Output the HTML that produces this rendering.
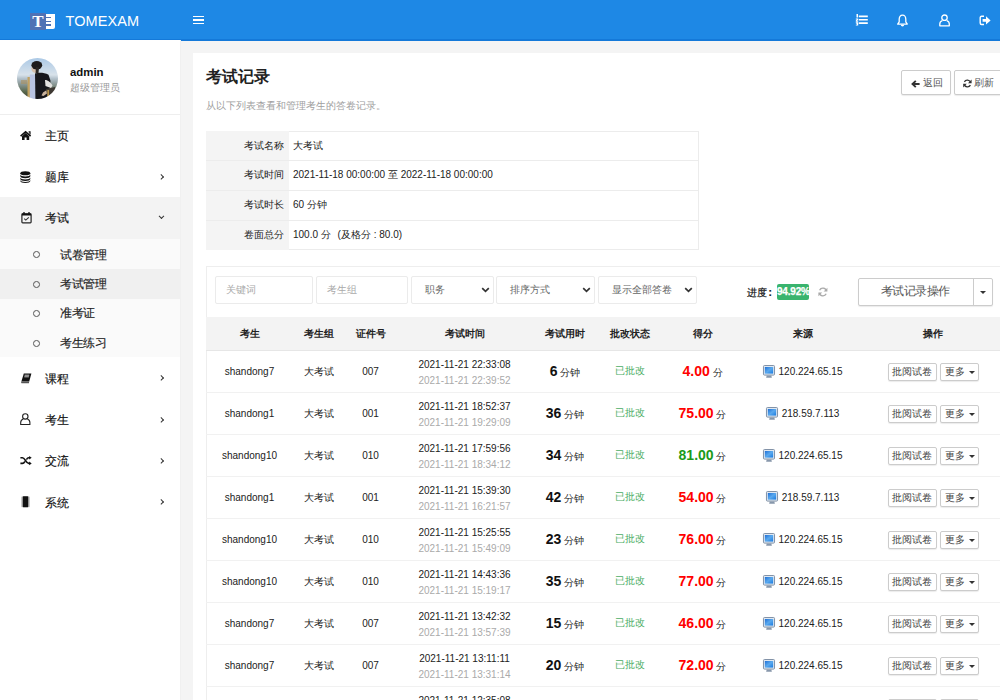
<!DOCTYPE html>
<html><head><meta charset="utf-8"><title>考试记录</title>
<style>
*{box-sizing:border-box;margin:0;padding:0}
html,body{width:1000px;height:700px;overflow:hidden}
body{position:relative;background:#f4f4f4;font-family:"Liberation Sans",sans-serif;color:#333;font-size:10px}
.a{position:absolute;white-space:nowrap}
svg{position:absolute;overflow:visible}
#hdr{position:absolute;left:0;top:0;width:1000px;height:41px;background:#1e88e5;box-shadow:inset 0 -2px 0 #1479d9}
.mt{position:absolute;left:45px;font-size:12px;letter-spacing:-0.5px;line-height:20px;color:#111;-webkit-text-stroke:0.15px #111}
.chev{position:absolute;left:158.6px;width:4.4px;height:4.4px;border-right:1.2px solid #333;border-top:1.2px solid #333;transform:rotate(45deg)}
.st{position:absolute;left:60px;font-size:12px;letter-spacing:-0.5px;line-height:20px;color:#222;-webkit-text-stroke:0.15px #222}
.bul{position:absolute;left:32.8px;width:6.8px;height:6.8px;border:1.2px solid #555;border-radius:50%}
.lab{position:absolute;left:206px;width:83px;height:29.6px;background:#f4f4f4;text-align:right;padding-right:5px;line-height:29.6px;font-size:10px;color:#222}
.val{position:absolute;left:293px;line-height:29.6px;font-size:10px;color:#222}
.hl{position:absolute;left:206px;width:493px;height:1px;background:#ececec}
.inp{position:absolute;top:275.5px;height:28px;border:1px solid #ebebeb;border-radius:2px;background:#fff}
.ph{position:absolute;left:10px;top:0;line-height:26px;font-size:10px;color:#aaa}
.sel .ph{color:#666;left:13px}
.dn{position:absolute;top:10.5px}
.th{position:absolute;top:317px;height:33px;line-height:33px;font-size:10px;font-weight:bold;color:#222;text-align:center}
.row{position:absolute;left:206px;width:800px;height:42px;border-bottom:1px solid #f1f1f1}
.c{position:absolute;text-align:center;font-size:10px;color:#222;white-space:nowrap}
.btn{position:absolute;height:18.5px;border:1px solid #ccc;border-radius:2px;background:#fff;box-shadow:0 1px 1px rgba(0,0,0,.08);font-size:10px;line-height:16.5px;color:#444;text-align:center}
.car{position:absolute;width:0;height:0;border-left:3px solid transparent;border-right:3px solid transparent;border-top:3px solid #333}
</style></head><body>
<div id="hdr">
<div class="a" style="left:30px;top:13.3px;width:16px;height:16.4px;background:#4f72b5"></div>
<div class="a" style="left:46px;top:13.9px;width:8.5px;height:14.9px;background:#fff;border-bottom-right-radius:2px"></div>
<div class="a" style="left:46px;top:16.7px;width:5px;height:1.6px;background:#4f72b5"></div>
<div class="a" style="left:46px;top:20.6px;width:5px;height:1.6px;background:#4f72b5"></div>
<div class="a" style="left:46px;top:24.4px;width:5px;height:1.6px;background:#4f72b5"></div>
<div class="a" style="left:32px;top:10.5px;font-family:'Liberation Serif',serif;font-weight:bold;font-size:17px;line-height:22px;color:#fff;width:12px;text-align:center">T</div>
<div class="a" style="left:65.5px;top:11px;font-size:14.5px;line-height:20px;color:#fff;letter-spacing:0.1px">TOMEXAM</div>
<div class="a" style="left:193px;top:15.7px;width:11px;height:1.6px;background:#fff"></div>
<div class="a" style="left:193px;top:19.1px;width:11px;height:1.6px;background:#fff"></div>
<div class="a" style="left:193px;top:22.5px;width:11px;height:1.6px;background:#fff"></div>
<svg width="14" height="14" style="left:855px;top:13px" viewBox="0 0 14 14"><path d="M3.8 3.4h9M3.8 6.8h9M3.8 10.1h9" stroke="#fff" stroke-width="1.6"/><path d="M1.5 1h1.5v3.6H1.5z" fill="#fff"/><path d="M.8 5.6h2.4v1.2l-1.2 1h1.2v.9H.8V7.6l1.2-1H.8z" fill="#fff"/><path d="M.8 9.3h2.4v3.3H.8v-.9h1.2v-.5H1.2v-.7h.8v-.3H.8z" fill="#fff"/></svg>
<svg width="12" height="13" style="left:897px;top:13.5px" viewBox="0 0 12 13"><path d="M5.5 1.2c-2.2 0-3.3 1.9-3.3 4v2.6L.7 10.1h9.6L8.8 7.8V5.2c0-2.1-1.1-4-3.3-4z" stroke="#fff" stroke-width="1.3" fill="none" stroke-linejoin="round"/><path d="M3.8 10.8a1.7 1.7 0 0 0 3.4 0z" fill="#fff"/></svg>
<svg width="12" height="13" style="left:938.5px;top:13.5px" viewBox="0 0 12 13"><circle cx="5.5" cy="3.7" r="2.7" stroke="#fff" stroke-width="1.3" fill="none"/><path d="M3.3 6.6C1.6 7.2.8 8.6.8 10v1.8h9.5V10c0-1.4-.8-2.8-2.5-3.4" stroke="#fff" stroke-width="1.3" fill="none" stroke-linejoin="round"/></svg>
<svg width="13" height="11" style="left:978.5px;top:14.5px" viewBox="0 0 13 11"><path d="M5 1.3H2.6C1.7 1.3 1.2 1.9 1.2 2.8v5.2c0 .9.5 1.5 1.4 1.5H5" stroke="#fff" stroke-width="1.4" fill="none"/><path d="M3.6 4.1h3.4V1.2l4.6 4.2-4.6 4.2V6.7H3.6z" fill="#fff"/></svg>
</div>
<div class="a" style="left:0;top:40px;width:180px;height:660px;background:#fff"></div>
<div class="a" style="left:16.7px;top:57.6px;width:41px;height:41px;border-radius:50%;overflow:hidden"><svg width="41" height="41" style="left:0;top:0;filter:blur(0.5px)" viewBox="0 0 41 41"><defs><linearGradient id="sky" x1="0" y1="0" x2="0" y2="1"><stop offset="0" stop-color="#a6c6e6"/><stop offset=".42" stop-color="#d8e2ea"/><stop offset=".5" stop-color="#b4c2cc"/><stop offset=".62" stop-color="#8c9a98"/><stop offset=".8" stop-color="#56654a"/><stop offset="1" stop-color="#3a3a2c"/></linearGradient></defs><rect x="-2" y="-2" width="45" height="45" fill="url(#sky)"/><path d="M10.5 19h3.5v22h-3.5z" fill="#c2a260"/><path d="M4 22h6v4H4z" fill="#a89060" opacity=".6"/><path d="M12.8 16.5h6v25h-6z" fill="#b9c4e2"/><path d="M18 15.5c3-1.2 9-1.3 13.5 1.2l2 6-1.5 19H18.5z" fill="#17171c"/><path d="M28 22c3 0 6 2.5 7.5 5.5l-1.5 2.5-5.5-2z" fill="#e4e2e0"/><path d="M34 29.5c-2 1.5-5 3-8 5l-1.5 3 2 .5c2.5-2 6-4 8.5-6.5z" fill="#c9b29c"/><path d="M29 31l9-2 3 12h-10z" fill="#3d3832"/><path d="M30.3 32h1.8v9h-1.8z" fill="#b8934a"/><path d="M14.2 9.6c.2 2.8 1 4.6 3 5.2l3.2-.4.6-6.2z" fill="#d4beac"/><ellipse cx="19.8" cy="7.2" rx="5.4" ry="4.2" fill="#1d1a1a"/><path d="M19 9l3 .5-.5 5.5-3 .5z" fill="#2a2522"/></svg></div>
<div class="a" style="left:70px;top:63px;font-size:11.4px;font-weight:bold;line-height:18px;color:#111">admin</div>
<div class="a" style="left:70px;top:79px;font-size:10px;line-height:18px;color:#999">超级管理员</div>
<div class="a" style="left:0;top:114px;width:180px;height:1px;background:#eee"></div>
<div class="a" style="left:0;top:197.3px;width:180px;height:42px;background:#f3f3f3"></div>
<div class="a" style="left:0;top:239.3px;width:180px;height:118px;background:#fafafa"></div>
<div class="a" style="left:0;top:269px;width:180px;height:29.5px;background:#f0f0f0"></div>
<div class="mt" style="top:126px">主页</div>
<div class="mt" style="top:167px">题库</div>
<div class="chev" style="top:174.7px"></div>
<div class="mt" style="top:208px">考试</div>
<div class="chev" style="top:213.7px;left:159.3px;transform:rotate(135deg)"></div>
<div class="mt" style="top:368.5px">课程</div>
<div class="chev" style="top:376.2px"></div>
<div class="mt" style="top:410px">考生</div>
<div class="chev" style="top:417.7px"></div>
<div class="mt" style="top:451px">交流</div>
<div class="chev" style="top:458.7px"></div>
<div class="mt" style="top:492.5px">系统</div>
<div class="chev" style="top:500.2px"></div>
<div class="st" style="top:244.6px">试卷管理</div>
<div class="bul" style="top:251.4px"></div>
<div class="st" style="top:274px">考试管理</div>
<div class="bul" style="top:280.8px"></div>
<div class="st" style="top:303.4px">准考证</div>
<div class="bul" style="top:310.2px"></div>
<div class="st" style="top:333.3px">考生练习</div>
<div class="bul" style="top:340.1px"></div>
<svg width="12" height="10" style="left:20px;top:131px" viewBox="0 0 12 10"><path d="M0.6 5.2L5.6 .8l5 4.4" stroke="#111" stroke-width="1.6" fill="none"/><path d="M8.6 .8h1.4v2.6" stroke="#111" stroke-width="1.2" fill="none"/><path d="M2 5.2L5.6 2.1 9.2 5.2V9H6.6V6.6H4.6V9H2z" fill="#111"/></svg>
<svg width="11" height="12" style="left:20.3px;top:171px" viewBox="0 0 11 12"><ellipse cx="5.3" cy="2.2" rx="5" ry="2" fill="#111"/><path d="M.3 3.6c0 1.2 2.2 2 5 2s5-.8 5-2v1.6c0 1.2-2.2 2-5 2s-5-.8-5-2zM.3 6.4c0 1.2 2.2 2 5 2s5-.8 5-2v1.6c0 1.2-2.2 2-5 2s-5-.8-5-2zM.3 9.1c0 1.2 2.2 2 5 2s5-.8 5-2v.9c0 1.2-2.2 2-5 2s-5-.8-5-2z" fill="#111"/></svg>
<svg width="12" height="12" style="left:20.5px;top:212px" viewBox="0 0 12 12"><rect x="0.9" y="1.9" width="9.2" height="9" rx=".8" stroke="#222" stroke-width="1.2" fill="none"/><path d="M.9 2.5h9.2" stroke="#111" stroke-width="2"/><path d="M3 0v2.6M8 0v2.6" stroke="#111" stroke-width="1.3"/><path d="M3.2 6.6l1.6 1.5 3-2.8" stroke="#333" stroke-width="1.1" fill="none"/></svg>
<svg width="11" height="11" style="left:20.5px;top:373px" viewBox="0 0 11 11"><path d="M2.8.4h7.6L8.2 8.4H.4z" fill="#111"/><path d="M.4 8.4h7.8l-.3 1.8H.6c-.5 0-.6-1.8-.2-1.8z" fill="#555"/><path d="M3.6 2.2h4.6M3.3 3.8h4.6" stroke="#ddd" stroke-width=".9"/></svg>
<svg width="11" height="13" style="left:20.3px;top:413px" viewBox="0 0 11 13"><circle cx="5.3" cy="3.4" r="2.7" stroke="#222" stroke-width="1.1" fill="none"/><path d="M3.2 5.9C1.4 6.6.7 8.1.7 9.6v1.9h9.2V9.6c0-1.5-.7-3-2.5-3.7" stroke="#222" stroke-width="1.1" fill="none"/></svg>
<svg width="12" height="10" style="left:20.3px;top:455.5px" viewBox="0 0 12 10"><path d="M.4 1.8h2c2.6 0 3.6 5.6 6.4 5.6h1.2M.4 7.4h2c1.2 0 1.9-.9 2.5-1.9M6.4 3.6c.6-1 1.2-1.8 2.4-1.8h1.2" stroke="#111" stroke-width="1.6" fill="none"/><path d="M9.2 0l2.5 1.8-2.5 1.8zM9.2 5.6l2.5 1.8-2.5 1.8z" fill="#111"/></svg>
<svg width="11" height="12" style="left:20.3px;top:495.5px" viewBox="0 0 11 12"><rect x="1" y="0.4" width="9" height="10.8" rx="1" fill="#ccc"/><rect x="2.7" y="0.2" width="5.6" height="11" rx=".6" fill="#111"/></svg>
<div class="a" style="left:180px;top:40px;width:1px;height:660px;background:#f0f0f0"></div>
<div class="a" style="left:193px;top:53px;width:820px;height:700px;background:#fff"></div>
<div class="a" style="left:206px;top:66px;font-size:16px;font-weight:bold;line-height:22px;color:#222">考试记录</div>
<div class="a" style="left:206px;top:95.5px;font-size:10px;line-height:20px;color:#a0a0a0">从以下列表查看和管理考生的答卷记录。</div>
<div class="btn" style="left:901px;top:70px;width:49.5px;height:25px;line-height:23px;padding-left:20.5px;text-align:left;font-size:10px;color:#555">返回</div>
<svg width="9" height="8" style="left:910.5px;top:79.5px" viewBox="0 0 9 8"><path d="M8.6 4H1.8M4.8 .9L1.5 4l3.3 3.1" stroke="#333" stroke-width="1.9" fill="none"/></svg>
<div class="btn" style="left:953.8px;top:70px;width:60px;height:25px;line-height:23px;padding-left:19.5px;text-align:left;font-size:10px;color:#555">刷新</div>
<svg width="9" height="9" style="left:962.5px;top:78.5px" viewBox="0 0 9 9"><path d="M7.6 3.6A3.4 3.4 0 0 0 1.4 2.8M1.2 5.4a3.4 3.4 0 0 0 6.2.8" stroke="#333" stroke-width="1.4" fill="none"/><path d="M8.6 .6v3.6H5zM.2 8.4V4.8h3.6z" fill="#333"/></svg>
<div class="a" style="left:206px;top:130.5px;width:493px;height:119px;border:1px solid #ececec"></div>
<div class="lab" style="top:130.50px;height:29.75px">考试名称</div>
<div class="val" style="top:130.50px">大考试</div>
<div class="lab" style="top:160.25px;height:29.75px">考试时间</div>
<div class="val" style="top:160.25px">2021-11-18 00:00:00 至 2022-11-18 00:00:00</div>
<div class="hl" style="top:160.25px"></div>
<div class="lab" style="top:190.00px;height:29.75px">考试时长</div>
<div class="val" style="top:190.00px">60 分钟</div>
<div class="hl" style="top:190.00px"></div>
<div class="lab" style="top:219.75px;height:29.75px">卷面总分</div>
<div class="val" style="top:219.75px">100.0 分 <span style="margin-left:4px">(及格分 : 80.0)</span></div>
<div class="hl" style="top:219.75px"></div>
<div class="a" style="left:206px;top:266.3px;width:820px;height:450px;border:1px solid #eee;background:#fff"></div>
<div class="inp" style="left:215px;width:98.3px"><div class="ph">关键词</div></div>
<div class="inp" style="left:316.2px;width:91.8px"><div class="ph">考生组</div></div>
<div class="inp sel" style="left:411.4px;width:82.3px"><div class="ph">职务</div><svg class="dn" width="9" height="6" style="left:69px" viewBox="0 0 9 6"><path d="M1.2 1.2L4.5 4.4 7.8 1.2" stroke="#333" stroke-width="1.7" fill="none"/></svg></div>
<div class="inp sel" style="left:496px;width:98.6px"><div class="ph">排序方式</div><svg class="dn" width="9" height="6" style="left:85px" viewBox="0 0 9 6"><path d="M1.2 1.2L4.5 4.4 7.8 1.2" stroke="#333" stroke-width="1.7" fill="none"/></svg></div>
<div class="inp sel" style="left:597.6px;width:99.1px"><div class="ph">显示全部答卷</div><svg class="dn" width="9" height="6" style="left:85.5px" viewBox="0 0 9 6"><path d="M1.2 1.2L4.5 4.4 7.8 1.2" stroke="#333" stroke-width="1.7" fill="none"/></svg></div>
<div class="a" style="left:747px;top:282.5px;font-size:10px;line-height:20px;color:#111;-webkit-text-stroke:0.2px #111">进度<span style="margin-left:1.5px;font-weight:bold">:</span></div>
<div class="a" style="left:777px;top:283.5px;width:32px;height:16.4px;background:#39b46e;border-radius:2px;color:#fff;font-weight:bold;font-size:10px;line-height:16.4px;text-align:center;letter-spacing:-0.2px;-webkit-text-stroke:0.25px #fff">94.92%</div>
<svg width="10" height="10" style="left:817.5px;top:287px" viewBox="0 0 10 10"><path d="M8.4 4A3.6 3.6 0 0 0 1.6 3.2M1.4 6a3.6 3.6 0 0 0 6.8.8" stroke="#aaa" stroke-width="1.3" fill="none"/><path d="M9.4 .8v3.8H5.6zM.4 9.2V5.4h3.8z" fill="#aaa"/></svg>
<div class="btn" style="left:858.3px;top:278.3px;width:135.2px;height:27.3px;line-height:25.3px;font-size:12px;letter-spacing:-0.5px;color:#555;padding-right:21px">考试记录操作</div>
<div class="a" style="left:972.5px;top:278.3px;width:1px;height:27.3px;background:#ccc"></div>
<div class="car" style="left:980px;top:291px;border-width:3.2px 3px 0 3px"></div>
<div class="a" style="left:206px;top:317px;width:800px;height:34px;background:#f3f3f3;border-bottom:1px solid #e6e6e6"></div>
<div class="th" style="left:209.5px;width:80px">考生</div>
<div class="th" style="left:278.8px;width:80px">考生组</div>
<div class="th" style="left:330.5px;width:80px">证件号</div>
<div class="th" style="left:424.5px;width:80px">考试时间</div>
<div class="th" style="left:525px;width:80px">考试用时</div>
<div class="th" style="left:590px;width:80px">批改状态</div>
<div class="th" style="left:662.5px;width:80px">得分</div>
<div class="th" style="left:762.5px;width:80px">来源</div>
<div class="th" style="left:892.5px;width:80px">操作</div>
<div class="row" style="top:351.0px">
<div class="c" style="left:0.5px;width:86px;top:11px;line-height:20px">shandong7</div>
<div class="c" style="left:87.8px;width:50px;top:11px;line-height:20px">大考试</div>
<div class="c" style="left:139.5px;width:50px;top:11px;line-height:20px">007</div>
<div class="c" style="left:193.5px;width:130px;top:5.5px;line-height:16px;color:#222">2021-11-21 22:33:08</div>
<div class="c" style="left:193.5px;width:130px;top:21.5px;line-height:16px;color:#aaa">2021-11-21 22:39:52</div>
<div class="c" style="left:327.0px;width:64px;top:10px;line-height:20px"><b style="font-size:14px;color:#111">6</b> <span style="font-size:9.5px">分钟</span></div>
<div class="c" style="left:392.0px;width:64px;top:10px;line-height:20px;color:#4cae66">已批改</div>
<div class="c" style="left:456.5px;width:80px;top:10px;line-height:20px"><b style="font-size:14px;color:#f00">4.00</b> <span style="font-size:10px">分</span></div>
<div class="c" style="left:536.5px;width:120px;top:10.5px;line-height:20px"><span style="display:inline-block;position:relative;width:12px;height:13px;vertical-align:-3px;margin-right:4px"><svg width="12" height="13" viewBox="0 0 13 13" preserveAspectRatio="none" style="left:0;top:0"><defs><linearGradient id="mg" x1="0" y1="0" x2="1" y2="1"><stop offset="0" stop-color="#1f6fd6"/><stop offset=".5" stop-color="#5aa9ee"/><stop offset="1" stop-color="#1a7be0"/></linearGradient></defs><rect x="0.5" y="0.5" width="12" height="9.6" rx="1" fill="#dfe8f2" stroke="#7d8ea3" stroke-width="1"/><rect x="2" y="2" width="9" height="6.6" fill="url(#mg)"/><path d="M4 10.6h5l.6 2.2h-6.2z" fill="#8797ab"/></svg></span>120.224.65.15</div>
<div class="btn" style="left:681.6px;top:11.8px;width:49px">批阅试卷</div>
<div class="btn" style="left:734px;top:11.8px;width:38.6px;text-align:left;padding-left:4px">更多<div class="car" style="left:28px;top:7.5px"></div></div>
</div>
<div class="row" style="top:393.0px">
<div class="c" style="left:0.5px;width:86px;top:11px;line-height:20px">shandong1</div>
<div class="c" style="left:87.8px;width:50px;top:11px;line-height:20px">大考试</div>
<div class="c" style="left:139.5px;width:50px;top:11px;line-height:20px">001</div>
<div class="c" style="left:193.5px;width:130px;top:5.5px;line-height:16px;color:#222">2021-11-21 18:52:37</div>
<div class="c" style="left:193.5px;width:130px;top:21.5px;line-height:16px;color:#aaa">2021-11-21 19:29:09</div>
<div class="c" style="left:327.0px;width:64px;top:10px;line-height:20px"><b style="font-size:14px;color:#111">36</b> <span style="font-size:9.5px">分钟</span></div>
<div class="c" style="left:392.0px;width:64px;top:10px;line-height:20px;color:#4cae66">已批改</div>
<div class="c" style="left:456.5px;width:80px;top:10px;line-height:20px"><b style="font-size:14px;color:#f00">75.00</b> <span style="font-size:10px">分</span></div>
<div class="c" style="left:536.5px;width:120px;top:10.5px;line-height:20px"><span style="display:inline-block;position:relative;width:12px;height:13px;vertical-align:-3px;margin-right:4px"><svg width="12" height="13" viewBox="0 0 13 13" preserveAspectRatio="none" style="left:0;top:0"><defs><linearGradient id="mg" x1="0" y1="0" x2="1" y2="1"><stop offset="0" stop-color="#1f6fd6"/><stop offset=".5" stop-color="#5aa9ee"/><stop offset="1" stop-color="#1a7be0"/></linearGradient></defs><rect x="0.5" y="0.5" width="12" height="9.6" rx="1" fill="#dfe8f2" stroke="#7d8ea3" stroke-width="1"/><rect x="2" y="2" width="9" height="6.6" fill="url(#mg)"/><path d="M4 10.6h5l.6 2.2h-6.2z" fill="#8797ab"/></svg></span>218.59.7.113</div>
<div class="btn" style="left:681.6px;top:11.8px;width:49px">批阅试卷</div>
<div class="btn" style="left:734px;top:11.8px;width:38.6px;text-align:left;padding-left:4px">更多<div class="car" style="left:28px;top:7.5px"></div></div>
</div>
<div class="row" style="top:435.0px">
<div class="c" style="left:0.5px;width:86px;top:11px;line-height:20px">shandong10</div>
<div class="c" style="left:87.8px;width:50px;top:11px;line-height:20px">大考试</div>
<div class="c" style="left:139.5px;width:50px;top:11px;line-height:20px">010</div>
<div class="c" style="left:193.5px;width:130px;top:5.5px;line-height:16px;color:#222">2021-11-21 17:59:56</div>
<div class="c" style="left:193.5px;width:130px;top:21.5px;line-height:16px;color:#aaa">2021-11-21 18:34:12</div>
<div class="c" style="left:327.0px;width:64px;top:10px;line-height:20px"><b style="font-size:14px;color:#111">34</b> <span style="font-size:9.5px">分钟</span></div>
<div class="c" style="left:392.0px;width:64px;top:10px;line-height:20px;color:#4cae66">已批改</div>
<div class="c" style="left:456.5px;width:80px;top:10px;line-height:20px"><b style="font-size:14px;color:#1a9a1a">81.00</b> <span style="font-size:10px">分</span></div>
<div class="c" style="left:536.5px;width:120px;top:10.5px;line-height:20px"><span style="display:inline-block;position:relative;width:12px;height:13px;vertical-align:-3px;margin-right:4px"><svg width="12" height="13" viewBox="0 0 13 13" preserveAspectRatio="none" style="left:0;top:0"><defs><linearGradient id="mg" x1="0" y1="0" x2="1" y2="1"><stop offset="0" stop-color="#1f6fd6"/><stop offset=".5" stop-color="#5aa9ee"/><stop offset="1" stop-color="#1a7be0"/></linearGradient></defs><rect x="0.5" y="0.5" width="12" height="9.6" rx="1" fill="#dfe8f2" stroke="#7d8ea3" stroke-width="1"/><rect x="2" y="2" width="9" height="6.6" fill="url(#mg)"/><path d="M4 10.6h5l.6 2.2h-6.2z" fill="#8797ab"/></svg></span>120.224.65.15</div>
<div class="btn" style="left:681.6px;top:11.8px;width:49px">批阅试卷</div>
<div class="btn" style="left:734px;top:11.8px;width:38.6px;text-align:left;padding-left:4px">更多<div class="car" style="left:28px;top:7.5px"></div></div>
</div>
<div class="row" style="top:477.0px">
<div class="c" style="left:0.5px;width:86px;top:11px;line-height:20px">shandong1</div>
<div class="c" style="left:87.8px;width:50px;top:11px;line-height:20px">大考试</div>
<div class="c" style="left:139.5px;width:50px;top:11px;line-height:20px">001</div>
<div class="c" style="left:193.5px;width:130px;top:5.5px;line-height:16px;color:#222">2021-11-21 15:39:30</div>
<div class="c" style="left:193.5px;width:130px;top:21.5px;line-height:16px;color:#aaa">2021-11-21 16:21:57</div>
<div class="c" style="left:327.0px;width:64px;top:10px;line-height:20px"><b style="font-size:14px;color:#111">42</b> <span style="font-size:9.5px">分钟</span></div>
<div class="c" style="left:392.0px;width:64px;top:10px;line-height:20px;color:#4cae66">已批改</div>
<div class="c" style="left:456.5px;width:80px;top:10px;line-height:20px"><b style="font-size:14px;color:#f00">54.00</b> <span style="font-size:10px">分</span></div>
<div class="c" style="left:536.5px;width:120px;top:10.5px;line-height:20px"><span style="display:inline-block;position:relative;width:12px;height:13px;vertical-align:-3px;margin-right:4px"><svg width="12" height="13" viewBox="0 0 13 13" preserveAspectRatio="none" style="left:0;top:0"><defs><linearGradient id="mg" x1="0" y1="0" x2="1" y2="1"><stop offset="0" stop-color="#1f6fd6"/><stop offset=".5" stop-color="#5aa9ee"/><stop offset="1" stop-color="#1a7be0"/></linearGradient></defs><rect x="0.5" y="0.5" width="12" height="9.6" rx="1" fill="#dfe8f2" stroke="#7d8ea3" stroke-width="1"/><rect x="2" y="2" width="9" height="6.6" fill="url(#mg)"/><path d="M4 10.6h5l.6 2.2h-6.2z" fill="#8797ab"/></svg></span>218.59.7.113</div>
<div class="btn" style="left:681.6px;top:11.8px;width:49px">批阅试卷</div>
<div class="btn" style="left:734px;top:11.8px;width:38.6px;text-align:left;padding-left:4px">更多<div class="car" style="left:28px;top:7.5px"></div></div>
</div>
<div class="row" style="top:519.0px">
<div class="c" style="left:0.5px;width:86px;top:11px;line-height:20px">shandong10</div>
<div class="c" style="left:87.8px;width:50px;top:11px;line-height:20px">大考试</div>
<div class="c" style="left:139.5px;width:50px;top:11px;line-height:20px">010</div>
<div class="c" style="left:193.5px;width:130px;top:5.5px;line-height:16px;color:#222">2021-11-21 15:25:55</div>
<div class="c" style="left:193.5px;width:130px;top:21.5px;line-height:16px;color:#aaa">2021-11-21 15:49:09</div>
<div class="c" style="left:327.0px;width:64px;top:10px;line-height:20px"><b style="font-size:14px;color:#111">23</b> <span style="font-size:9.5px">分钟</span></div>
<div class="c" style="left:392.0px;width:64px;top:10px;line-height:20px;color:#4cae66">已批改</div>
<div class="c" style="left:456.5px;width:80px;top:10px;line-height:20px"><b style="font-size:14px;color:#f00">76.00</b> <span style="font-size:10px">分</span></div>
<div class="c" style="left:536.5px;width:120px;top:10.5px;line-height:20px"><span style="display:inline-block;position:relative;width:12px;height:13px;vertical-align:-3px;margin-right:4px"><svg width="12" height="13" viewBox="0 0 13 13" preserveAspectRatio="none" style="left:0;top:0"><defs><linearGradient id="mg" x1="0" y1="0" x2="1" y2="1"><stop offset="0" stop-color="#1f6fd6"/><stop offset=".5" stop-color="#5aa9ee"/><stop offset="1" stop-color="#1a7be0"/></linearGradient></defs><rect x="0.5" y="0.5" width="12" height="9.6" rx="1" fill="#dfe8f2" stroke="#7d8ea3" stroke-width="1"/><rect x="2" y="2" width="9" height="6.6" fill="url(#mg)"/><path d="M4 10.6h5l.6 2.2h-6.2z" fill="#8797ab"/></svg></span>120.224.65.15</div>
<div class="btn" style="left:681.6px;top:11.8px;width:49px">批阅试卷</div>
<div class="btn" style="left:734px;top:11.8px;width:38.6px;text-align:left;padding-left:4px">更多<div class="car" style="left:28px;top:7.5px"></div></div>
</div>
<div class="row" style="top:561.0px">
<div class="c" style="left:0.5px;width:86px;top:11px;line-height:20px">shandong10</div>
<div class="c" style="left:87.8px;width:50px;top:11px;line-height:20px">大考试</div>
<div class="c" style="left:139.5px;width:50px;top:11px;line-height:20px">010</div>
<div class="c" style="left:193.5px;width:130px;top:5.5px;line-height:16px;color:#222">2021-11-21 14:43:36</div>
<div class="c" style="left:193.5px;width:130px;top:21.5px;line-height:16px;color:#aaa">2021-11-21 15:19:17</div>
<div class="c" style="left:327.0px;width:64px;top:10px;line-height:20px"><b style="font-size:14px;color:#111">35</b> <span style="font-size:9.5px">分钟</span></div>
<div class="c" style="left:392.0px;width:64px;top:10px;line-height:20px;color:#4cae66">已批改</div>
<div class="c" style="left:456.5px;width:80px;top:10px;line-height:20px"><b style="font-size:14px;color:#f00">77.00</b> <span style="font-size:10px">分</span></div>
<div class="c" style="left:536.5px;width:120px;top:10.5px;line-height:20px"><span style="display:inline-block;position:relative;width:12px;height:13px;vertical-align:-3px;margin-right:4px"><svg width="12" height="13" viewBox="0 0 13 13" preserveAspectRatio="none" style="left:0;top:0"><defs><linearGradient id="mg" x1="0" y1="0" x2="1" y2="1"><stop offset="0" stop-color="#1f6fd6"/><stop offset=".5" stop-color="#5aa9ee"/><stop offset="1" stop-color="#1a7be0"/></linearGradient></defs><rect x="0.5" y="0.5" width="12" height="9.6" rx="1" fill="#dfe8f2" stroke="#7d8ea3" stroke-width="1"/><rect x="2" y="2" width="9" height="6.6" fill="url(#mg)"/><path d="M4 10.6h5l.6 2.2h-6.2z" fill="#8797ab"/></svg></span>120.224.65.15</div>
<div class="btn" style="left:681.6px;top:11.8px;width:49px">批阅试卷</div>
<div class="btn" style="left:734px;top:11.8px;width:38.6px;text-align:left;padding-left:4px">更多<div class="car" style="left:28px;top:7.5px"></div></div>
</div>
<div class="row" style="top:603.0px">
<div class="c" style="left:0.5px;width:86px;top:11px;line-height:20px">shandong7</div>
<div class="c" style="left:87.8px;width:50px;top:11px;line-height:20px">大考试</div>
<div class="c" style="left:139.5px;width:50px;top:11px;line-height:20px">007</div>
<div class="c" style="left:193.5px;width:130px;top:5.5px;line-height:16px;color:#222">2021-11-21 13:42:32</div>
<div class="c" style="left:193.5px;width:130px;top:21.5px;line-height:16px;color:#aaa">2021-11-21 13:57:39</div>
<div class="c" style="left:327.0px;width:64px;top:10px;line-height:20px"><b style="font-size:14px;color:#111">15</b> <span style="font-size:9.5px">分钟</span></div>
<div class="c" style="left:392.0px;width:64px;top:10px;line-height:20px;color:#4cae66">已批改</div>
<div class="c" style="left:456.5px;width:80px;top:10px;line-height:20px"><b style="font-size:14px;color:#f00">46.00</b> <span style="font-size:10px">分</span></div>
<div class="c" style="left:536.5px;width:120px;top:10.5px;line-height:20px"><span style="display:inline-block;position:relative;width:12px;height:13px;vertical-align:-3px;margin-right:4px"><svg width="12" height="13" viewBox="0 0 13 13" preserveAspectRatio="none" style="left:0;top:0"><defs><linearGradient id="mg" x1="0" y1="0" x2="1" y2="1"><stop offset="0" stop-color="#1f6fd6"/><stop offset=".5" stop-color="#5aa9ee"/><stop offset="1" stop-color="#1a7be0"/></linearGradient></defs><rect x="0.5" y="0.5" width="12" height="9.6" rx="1" fill="#dfe8f2" stroke="#7d8ea3" stroke-width="1"/><rect x="2" y="2" width="9" height="6.6" fill="url(#mg)"/><path d="M4 10.6h5l.6 2.2h-6.2z" fill="#8797ab"/></svg></span>120.224.65.15</div>
<div class="btn" style="left:681.6px;top:11.8px;width:49px">批阅试卷</div>
<div class="btn" style="left:734px;top:11.8px;width:38.6px;text-align:left;padding-left:4px">更多<div class="car" style="left:28px;top:7.5px"></div></div>
</div>
<div class="row" style="top:645.0px">
<div class="c" style="left:0.5px;width:86px;top:11px;line-height:20px">shandong7</div>
<div class="c" style="left:87.8px;width:50px;top:11px;line-height:20px">大考试</div>
<div class="c" style="left:139.5px;width:50px;top:11px;line-height:20px">007</div>
<div class="c" style="left:193.5px;width:130px;top:5.5px;line-height:16px;color:#222">2021-11-21 13:11:11</div>
<div class="c" style="left:193.5px;width:130px;top:21.5px;line-height:16px;color:#aaa">2021-11-21 13:31:14</div>
<div class="c" style="left:327.0px;width:64px;top:10px;line-height:20px"><b style="font-size:14px;color:#111">20</b> <span style="font-size:9.5px">分钟</span></div>
<div class="c" style="left:392.0px;width:64px;top:10px;line-height:20px;color:#4cae66">已批改</div>
<div class="c" style="left:456.5px;width:80px;top:10px;line-height:20px"><b style="font-size:14px;color:#f00">72.00</b> <span style="font-size:10px">分</span></div>
<div class="c" style="left:536.5px;width:120px;top:10.5px;line-height:20px"><span style="display:inline-block;position:relative;width:12px;height:13px;vertical-align:-3px;margin-right:4px"><svg width="12" height="13" viewBox="0 0 13 13" preserveAspectRatio="none" style="left:0;top:0"><defs><linearGradient id="mg" x1="0" y1="0" x2="1" y2="1"><stop offset="0" stop-color="#1f6fd6"/><stop offset=".5" stop-color="#5aa9ee"/><stop offset="1" stop-color="#1a7be0"/></linearGradient></defs><rect x="0.5" y="0.5" width="12" height="9.6" rx="1" fill="#dfe8f2" stroke="#7d8ea3" stroke-width="1"/><rect x="2" y="2" width="9" height="6.6" fill="url(#mg)"/><path d="M4 10.6h5l.6 2.2h-6.2z" fill="#8797ab"/></svg></span>120.224.65.15</div>
<div class="btn" style="left:681.6px;top:11.8px;width:49px">批阅试卷</div>
<div class="btn" style="left:734px;top:11.8px;width:38.6px;text-align:left;padding-left:4px">更多<div class="car" style="left:28px;top:7.5px"></div></div>
</div>
<div class="row" style="top:687.0px">
<div class="c" style="left:0.5px;width:86px;top:11px;line-height:20px">shandong7</div>
<div class="c" style="left:87.8px;width:50px;top:11px;line-height:20px">大考试</div>
<div class="c" style="left:139.5px;width:50px;top:11px;line-height:20px">007</div>
<div class="c" style="left:193.5px;width:130px;top:5.5px;line-height:16px;color:#222">2021-11-21 12:35:08</div>
<div class="c" style="left:193.5px;width:130px;top:21.5px;line-height:16px;color:#aaa">2021-11-21 12:50:00</div>
<div class="c" style="left:327.0px;width:64px;top:10px;line-height:20px"><b style="font-size:14px;color:#111">15</b> <span style="font-size:9.5px">分钟</span></div>
<div class="c" style="left:392.0px;width:64px;top:10px;line-height:20px;color:#4cae66">已批改</div>
<div class="c" style="left:456.5px;width:80px;top:10px;line-height:20px"><b style="font-size:14px;color:#f00">60.00</b> <span style="font-size:10px">分</span></div>
<div class="c" style="left:536.5px;width:120px;top:10.5px;line-height:20px"><span style="display:inline-block;position:relative;width:12px;height:13px;vertical-align:-3px;margin-right:4px"><svg width="12" height="13" viewBox="0 0 13 13" preserveAspectRatio="none" style="left:0;top:0"><defs><linearGradient id="mg" x1="0" y1="0" x2="1" y2="1"><stop offset="0" stop-color="#1f6fd6"/><stop offset=".5" stop-color="#5aa9ee"/><stop offset="1" stop-color="#1a7be0"/></linearGradient></defs><rect x="0.5" y="0.5" width="12" height="9.6" rx="1" fill="#dfe8f2" stroke="#7d8ea3" stroke-width="1"/><rect x="2" y="2" width="9" height="6.6" fill="url(#mg)"/><path d="M4 10.6h5l.6 2.2h-6.2z" fill="#8797ab"/></svg></span>120.224.65.15</div>
<div class="btn" style="left:681.6px;top:11.8px;width:49px">批阅试卷</div>
<div class="btn" style="left:734px;top:11.8px;width:38.6px;text-align:left;padding-left:4px">更多<div class="car" style="left:28px;top:7.5px"></div></div>
</div>
</body></html>
